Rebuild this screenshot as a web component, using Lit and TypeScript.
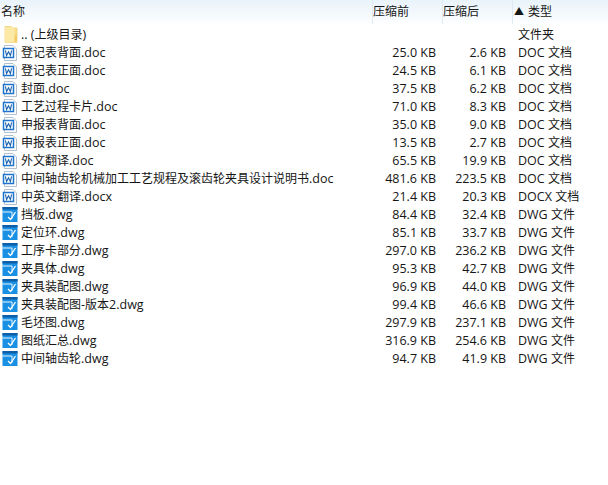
import { LitElement, html, css, svg } from "lit";
import { customElement } from "lit/decorators.js";

const rows: [string, string, string, string, string][] = [
  ["d", "登记表背面.doc", "25.0 KB", "2.6 KB", "DOC 文档"],
  ["d", "登记表正面.doc", "24.5 KB", "6.1 KB", "DOC 文档"],
  ["d", "封面.doc", "37.5 KB", "6.2 KB", "DOC 文档"],
  ["d", "工艺过程卡片.doc", "71.0 KB", "8.3 KB", "DOC 文档"],
  ["d", "申报表背面.doc", "35.0 KB", "9.0 KB", "DOC 文档"],
  ["d", "申报表正面.doc", "13.5 KB", "2.7 KB", "DOC 文档"],
  ["d", "外文翻译.doc", "65.5 KB", "19.9 KB", "DOC 文档"],
  ["d", "中间轴齿轮机械加工工艺规程及滚齿轮夹具设计说明书.doc", "481.6 KB", "223.5 KB", "DOC 文档"],
  ["d", "中英文翻译.docx", "21.4 KB", "20.3 KB", "DOCX 文档"],
  ["g", "挡板.dwg", "84.4 KB", "32.4 KB", "DWG 文件"],
  ["g", "定位环.dwg", "85.1 KB", "33.7 KB", "DWG 文件"],
  ["g", "工序卡部分.dwg", "297.0 KB", "236.2 KB", "DWG 文件"],
  ["g", "夹具体.dwg", "95.3 KB", "42.7 KB", "DWG 文件"],
  ["g", "夹具装配图.dwg", "96.9 KB", "44.0 KB", "DWG 文件"],
  ["g", "夹具装配图-版本2.dwg", "99.4 KB", "46.6 KB", "DWG 文件"],
  ["g", "毛坯图.dwg", "297.9 KB", "237.1 KB", "DWG 文件"],
  ["g", "图纸汇总.dwg", "316.9 KB", "254.6 KB", "DWG 文件"],
  ["g", "中间轴齿轮.dwg", "94.7 KB", "41.9 KB", "DWG 文件"],
];

const folderIcon = svg`<svg class="ic" width="18" height="18" viewBox="0 0 18 18">
  <path d="M5 .5H11.5L13 2H17V16.5H5Z" fill="#f9dc85" stroke="#edd07a" stroke-width=".8"/>
  <rect x="5" y="1" width="9.5" height="15.5" fill="#fde9a6"/>
  <path d="M14.5 16.5V10L17 8V14Z" fill="#f3cc66"/>
</svg>`;

const docIcon = svg`<svg class="ic" width="18" height="16" viewBox="0 0 18 16">
  <path d="M4.5 .5H13L16.5 4V15.5H4.5Z" fill="#fff" stroke="#b4bfcd"/>
  <rect x="3.5" y="3.5" width="10" height="9" fill="#fff" stroke="#1f74cc" stroke-width="1.5"/>
  <path d="M5.4 5.4L6.6 10.6L8.5 6.8L10.4 10.6L11.6 5.4" fill="none" stroke="#1f64ad" stroke-width="1.1"/>
</svg>`;

const dwgIcon = svg`<svg class="ic" width="18" height="16" viewBox="0 0 18 16">
  <rect x="2.5" y="0" width="15" height="15" fill="#1a90e4"/>
  <rect x="2.5" y="0" width="15" height="2.5" fill="#0f5fa8"/>
  <path d="M2.5 5H12V12" fill="none" stroke="#e8f5ff" stroke-width="1"/>
  <path d="M8 10L10.5 12.5L15.5 5" fill="none" stroke="#ffffff" stroke-width="1.3"/>
</svg>`;

const mixed = (text: string) =>
  text
    .split(/([\u3000-\u9fff]+)/)
    .map((part, i) => (i % 2 ? html`<span class="cjk">${part}</span>` : part));

@customElement("app-root")
export class AppRoot extends LitElement {
  static styles = css`
    :host {
      display: block;
      width: 608px;
      height: 485px;
      background: #fff;
      overflow: hidden;
      font-family: "Open Sans", "Noto Sans CJK SC", sans-serif;
      font-size: 12.5px;
      color: #161616;
    }
    .cjk {
      font-size: 12px;
    }
    .head,
    .row {
      display: grid;
      grid-template-columns: 372px 70px 70px 1fr;
      white-space: nowrap;
    }
    .head {
      height: 26px;
      background: linear-gradient(#e9f3fa, #f6fafd 60%, #ffffff);
    }
    .head > div {
      height: 24px;
      line-height: 23px;
      padding-left: 1px;
      box-sizing: border-box;
    }
    .head > div + div {
      box-shadow: inset 1px 0 0 #dde9f3;
    }
    .head .sort {
      display: flex;
      gap: 4px;
      padding-left: 2px;
    }
    .tri {
      font-size: 10px;
    }
    .row {
      height: 18px;
      line-height: 18px;
    }
    .name {
      display: flex;
      align-items: center;
      gap: 3px;
    }
    .ic {
      flex: none;
    }
    .num {
      text-align: right;
      padding-right: 6px;
    }
    .type {
      padding-left: 6px;
    }
  `;

  render() {
    return html`
      <div class="head">
        <div class="cjk">名称</div>
        <div class="cjk">压缩前</div>
        <div class="cjk">压缩后</div>
        <div class="sort"><span class="tri">▲</span><span class="cjk">类型</span></div>
      </div>
      <div class="row">
        <div class="name">${folderIcon}<span>${mixed(".. (上级目录)")}</span></div>
        <div class="num"></div>
        <div class="num"></div>
        <div class="type">${mixed("文件夹")}</div>
      </div>
      ${rows.map(
        ([k, n, a, b, t]) => html`
          <div class="row">
            <div class="name">${k === "d" ? docIcon : dwgIcon}<span>${mixed(n)}</span></div>
            <div class="num">${a}</div>
            <div class="num">${b}</div>
            <div class="type">${mixed(t)}</div>
          </div>
        `
      )}
    `;
  }
}
